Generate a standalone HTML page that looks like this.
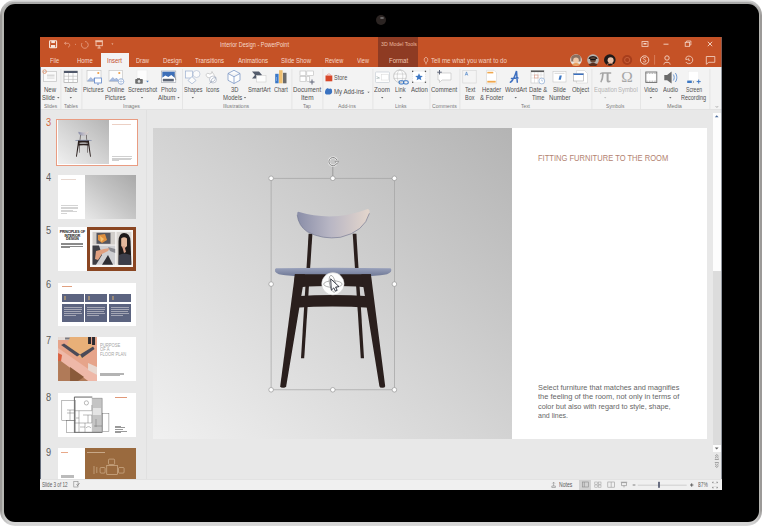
<!DOCTYPE html><html><head><meta charset="utf-8"><style>
*{margin:0;padding:0;box-sizing:border-box}
html,body{width:762px;height:527px;overflow:hidden;background:#fff;font-family:"Liberation Sans",sans-serif;position:relative}
.a{position:absolute}
.t{position:absolute;white-space:nowrap;line-height:1;transform-origin:0 0}
svg{position:absolute;left:0;top:0}
</style></head><body>
<div class="a" style="left:0;top:0;width:762px;height:526px;border-radius:15px;background:linear-gradient(to bottom,#e2e2e2 0px,#c6c6c6 2px,#9c9a98 16px,#9c9a98 510px,#c8c8c8 522px,#dcdcdc 526px)"></div>
<div class="a" style="left:2px;top:2px;width:758px;height:522px;border-radius:13px;background:linear-gradient(to bottom,#a8a8a8 0px,#b6b6b2 12px,#b6b6b2 508px,#d8d8d8 522px)"></div>
<div class="a" style="left:3.5px;top:4px;width:755px;height:518px;border-radius:11px;background:#000"></div>
<div class="a" style="left:376px;top:15px;width:10px;height:10px;border-radius:50%;background:#2b2422"></div>
<div class="a" style="left:380px;top:16.5px;width:4px;height:2px;border-radius:50%;background:#8a8a8a;opacity:.7"></div>
<div class="a" style="left:40px;top:37px;width:682px;height:453px;background:#e8e8e8;overflow:hidden">
</div>
<div class="a" style="left:40px;top:37px;width:682px;height:30px;background:#c55226"></div>
<div class="a" style="left:378px;top:37px;width:40px;height:30px;background:#8e3b23"></div>
<div class="a" style="left:101px;top:52.5px;width:28px;height:15px;background:#f3f3f3"></div>
<div class="a" style="left:40px;top:67px;width:682px;height:42px;background:#f3f3f3"></div>
<div class="a" style="left:40px;top:109px;width:682px;height:1px;background:#e2e2e2"></div>
<div class="a" style="left:146px;top:110px;width:1px;height:369px;background:#e0e0e0"></div>
<div class="a" style="left:40px;top:479px;width:682px;height:11px;background:#f0f0f0;border-top:1px solid #e2e2e2"></div>
<div class="a" style="left:40px;top:67px;width:1px;height:423px;background:#3a4458;opacity:.75"></div>
<div class="a" style="left:721px;top:37px;width:1px;height:453px;background:#5a6270;opacity:.6"></div>
<svg width="762" height="527" viewBox="0 0 762 527"><rect x="60.5" y="69" width="0.8" height="40" fill="#e1e1e1"/><rect x="81.5" y="69" width="0.8" height="40" fill="#e1e1e1"/><rect x="182" y="69" width="0.8" height="40" fill="#e1e1e1"/><rect x="291.5" y="69" width="0.8" height="40" fill="#e1e1e1"/><rect x="322.5" y="69" width="0.8" height="40" fill="#e1e1e1"/><rect x="372.5" y="69" width="0.8" height="40" fill="#e1e1e1"/><rect x="429.5" y="69" width="0.8" height="40" fill="#e1e1e1"/><rect x="459.5" y="69" width="0.8" height="40" fill="#e1e1e1"/><rect x="591.5" y="69" width="0.8" height="40" fill="#e1e1e1"/><rect x="640" y="69" width="0.8" height="40" fill="#e1e1e1"/><rect x="709.5" y="69" width="0.8" height="40" fill="#e1e1e1"/><path d="M57.1 97.1 h2.4 l-1.2 1.4z" fill="#6a6a6a"/><path d="M69.6 97.1 h2.4 l-1.2 1.4z" fill="#6a6a6a"/><path d="M140.8 97.1 h2.4 l-1.2 1.4z" fill="#6a6a6a"/><path d="M177.3 97.1 h2.4 l-1.2 1.4z" fill="#6a6a6a"/><path d="M191.6 97.1 h2.4 l-1.2 1.4z" fill="#6a6a6a"/><path d="M243.8 97.1 h2.4 l-1.2 1.4z" fill="#6a6a6a"/><path d="M381.0 97.1 h2.4 l-1.2 1.4z" fill="#6a6a6a"/><path d="M399.3 97.1 h2.4 l-1.2 1.4z" fill="#6a6a6a"/><path d="M514.5 97.1 h2.4 l-1.2 1.4z" fill="#6a6a6a"/><path d="M649.7 97.1 h2.4 l-1.2 1.4z" fill="#6a6a6a"/><path d="M669.1 97.1 h2.4 l-1.2 1.4z" fill="#6a6a6a"/><path d="M367.3 91.7 h2.4 l-1.2 1.4z" fill="#6a6a6a"/><path d="M604 97.1 h2.4 l-1.2 1.4z" fill="#c0c0c0"/><rect x="43.5" y="71.5" width="13" height="10" fill="#fafafa" stroke="#c9c9c9" stroke-width="0.8"/><rect x="47" y="74.5" width="7.5" height="2" fill="#d8d8d8"/><rect x="47" y="77.5" width="7.5" height="1.2" fill="#dedede"/><circle cx="44.6" cy="71.6" r="1.8" fill="none" stroke="#e0906a" stroke-width="0.9"/><rect x="64" y="71" width="13.5" height="11.5" fill="#fdfdfd" stroke="#a8a8a8" stroke-width="0.7"/><rect x="64" y="71" width="13.5" height="2" fill="#50586a"/><path d="M64 76.2h13.5M64 79.4h13.5M68.5 73v9.5M73 73v9.5" stroke="#b8b8b8" stroke-width="0.6"/><rect x="87" y="70.5" width="14" height="11" fill="#fdfdfd" stroke="#c8c8c8" stroke-width="0.7"/><circle cx="98.3" cy="73" r="1.1" fill="#f0a04a"/><path d="M87.5 81 l3.2-3.5 2.2 2 1.5-1.5 2.5 3z" fill="#a9bde0" stroke="#7e99c8" stroke-width="0.5"/><rect x="94.5" y="78" width="7" height="5" fill="#fff" stroke="#5f86c8" stroke-width="0.8"/><path d="M97 84.2h2" stroke="#5f86c8" stroke-width="0.8"/><rect x="109" y="70.5" width="13.5" height="11" fill="#fdfdfd" stroke="#c8c8c8" stroke-width="0.7"/><circle cx="119.3" cy="73" r="1.1" fill="#f0a04a"/><path d="M109.5 81 l3.2-3.5 2.2 2 1.5-1.5 2.5 3z" fill="#a9bde0" stroke="#7e99c8" stroke-width="0.5"/><circle cx="121" cy="81.5" r="2.8" fill="#fff" stroke="#7c9ccc" stroke-width="0.7"/><path d="M118.2 81.5h5.6M121 78.7v5.6" stroke="#9bb2d8" stroke-width="0.5"/><rect x="137" y="70" width="10" height="10.5" fill="#fdfdfd" stroke="#e6e6e6" stroke-width="0.5"/><rect x="135.2" y="79" width="7.6" height="4.8" rx="0.8" fill="#6e6e6e"/><rect x="137" y="78.2" width="3" height="1.2" fill="#6e6e6e"/><circle cx="139" cy="81.4" r="1.3" fill="#ddd"/><path d="M146.2 80.8 h2.6 l-1.3 1.6z" fill="#4a80c8"/><rect x="161.6" y="71" width="14.2" height="11.5" fill="#fff" stroke="#9aa0aa" stroke-width="0.6"/><rect x="162.3" y="71.7" width="12.5" height="6" fill="#3d6fb8"/><path d="M162.3 77.7 l3-2.2 3 1.5 3-2 3 2.5 v2.5 h-12.5z" fill="#fff"/><rect x="162.8" y="78.8" width="11" height="2.6" fill="#5b6474"/><path d="M174.3 74 l1.5 6" stroke="#777" stroke-width="0.5"/><rect x="185.5" y="71" width="7" height="7" fill="#fbfbfb" stroke="#9cb0d0" stroke-width="0.7"/><circle cx="196.5" cy="74" r="3.5" fill="#fbfbfb" stroke="#b6c2d6" stroke-width="0.7"/><path d="M192 76.5 l4 4 -4 3.3 -4-3.3z" fill="#fbfbfb" stroke="#9cb0d0" stroke-width="0.7"/><path d="M206 74.5 l2-1.5 1 1 2.2-.2 .8-2.3 1.2 2.3 c2 1 1 4-1 4 h-3 c-2 0-3-1.5-3.2-3.3z" fill="#fff" stroke="#b4b4b4" stroke-width="0.6"/><circle cx="213" cy="79.5" r="3.5" fill="#fff" stroke="#a0a8b8" stroke-width="0.6"/><path d="M211 82 c0-3 2-4.5 4.5-4.5 0 2.5-1.5 4.5-4.5 4.5z M209.5 83.5 l2-2" fill="none" stroke="#8c98b0" stroke-width="0.6"/><path d="M234 70.3 l6 3.2 v6.8 l-6 3.2 -6-3.2 v-6.8z M228 73.5 l6 3.2 6-3.2 M234 76.7v6.8" fill="#fdfdfd" stroke="#6f8cc0" stroke-width="0.7" stroke-linejoin="round"/><path d="M252 71.5 h7 l3 3.5 -3 3.5 h-7 l3-3.5z" fill="#545c6c"/><rect x="256.5" y="75.5" width="9.5" height="6.5" fill="#fdfdfd" stroke="#d0d0d0" stroke-width="0.6"/><rect x="275.2" y="73.8" width="3.4" height="9.5" fill="#3a78c8"/><rect x="279" y="70.2" width="3.6" height="13.1" fill="#f0c070"/><rect x="283" y="72.8" width="3.5" height="10.5" fill="#6c6c6c"/><path d="M276.5 77v4" stroke="#9cc0ee" stroke-width="0.6"/><rect x="300" y="71" width="5.8" height="4.5" fill="#fff" stroke="#bdbdbd" stroke-width="0.6"/><rect x="306.8" y="71" width="6.5" height="4.5" fill="#fff" stroke="#bdbdbd" stroke-width="0.6"/><rect x="300" y="76.5" width="5.8" height="5" fill="#fff" stroke="#bdbdbd" stroke-width="0.6"/><rect x="306.8" y="76.5" width="2.5" height="5" fill="#fff" stroke="#bdbdbd" stroke-width="0.6"/><path d="M312 79.5v5M309.5 82h5" stroke="#5e6478" stroke-width="1"/><path d="M325.5 75.5 h6.8 v5.8 h-6.8z" fill="#d8472a"/><path d="M327 75.5 c0-2 3.8-2 3.8 0" fill="none" stroke="#e87060" stroke-width="0.6"/><path d="M325.5 90 c1-2 3-2 3.5-1 1-1.2 3.3-.4 3 1.8 c.6 1.5-.4 3.5-2.2 3.6 h-3.4 c-1.6 0-1.8-2.2-.9-4.4z" fill="#3a72c0"/><rect x="375.5" y="72" width="14" height="10.5" rx="0.8" fill="#fdfdfd" stroke="#c0c8d0" stroke-width="0.6"/><rect x="381.5" y="74.5" width="7" height="5.5" fill="#fff" stroke="#d8d8d8" stroke-width="0.5"/><path d="M376.5 76.5 l3 1.5 M376.5 78.5 l3-0.5" stroke="#9aa" stroke-width="0.6"/><circle cx="400" cy="76.2" r="6.3" fill="#fdfdfd" stroke="#a8a8a8" stroke-width="0.6"/><ellipse cx="400" cy="76.2" rx="2.8" ry="6.3" fill="none" stroke="#b8b8b8" stroke-width="0.5"/><path d="M393.8 74h12.4M393.8 78.4h12.4" stroke="#b8b8b8" stroke-width="0.5"/><rect x="399" y="80.8" width="4.8" height="3.2" rx="1.6" fill="none" stroke="#3d78c4" stroke-width="1.1"/><rect x="403.5" y="80.8" width="4.8" height="3.2" rx="1.6" fill="none" stroke="#3d78c4" stroke-width="1.1"/><rect x="412.5" y="71.2" width="13" height="11" fill="#fff" stroke="#c8c8c8" stroke-width="0.4" stroke-dasharray="1 1"/><rect x="412" y="70.7" width="1.3" height="1.3" fill="#555"/><rect x="424.8" y="70.7" width="1.3" height="1.3" fill="#555"/><rect x="412" y="81.6" width="1.3" height="1.3" fill="#555"/><rect x="424.8" y="81.6" width="1.3" height="1.3" fill="#555"/><path d="M419 73.2 l1.1 2.5 2.7.2 -2.1 1.8 .7 2.6 -2.4-1.4 -2.4 1.4 .7-2.6 -2.1-1.8 2.7-.2z" fill="#3d78c4"/><path d="M438 73 h13 v7 h-9 l-2.5 2.5 v-2.5 h-1.5z" fill="#fff" stroke="#c4c4c4" stroke-width="0.7"/><path d="M439.5 70v4.5M437.2 72.2h4.6" stroke="#5e6478" stroke-width="1"/><rect x="462.8" y="70.6" width="13.4" height="12.4" fill="#f4f4f4" stroke="#d4d4d4" stroke-width="0.6"/><path d="M465.2 75.5 l1.3-3.6 1.3 3.6 M465.7 74.4h1.6" fill="none" stroke="#3d78c4" stroke-width="0.6"/><path d="M486.5 70.3 h7.5 l2.5 2.5 v11 h-10z" fill="#fff" stroke="#d4d4d4" stroke-width="0.6"/><rect x="487.3" y="71.8" width="6" height="1.6" fill="#f0a84e"/><rect x="487.3" y="80.8" width="8.4" height="1.8" fill="#f0a84e"/><path d="M510.3 82.2 c2-.8 4.5-5.5 6.2-11.2 c.4 3.5 .4 7.5 .8 11.2 M511.5 78.6 c2-.3 5-.5 6.5-.6" fill="none" stroke="#3d6fc0" stroke-width="1.5" stroke-linecap="round"/><rect x="531" y="70.5" width="13" height="12.5" fill="#fff" stroke="#c4c4c4" stroke-width="0.6"/><rect x="531" y="70.5" width="13" height="1.6" fill="#5a5a5a"/><path d="M531 75h13M531 78h13M534.5 72v11M538 72v11M541 72v11" stroke="#d0d0d0" stroke-width="0.5"/><rect x="534.5" y="75" width="3.5" height="3" fill="none" stroke="#e0907a" stroke-width="0.5"/><circle cx="541.8" cy="81" r="2.9" fill="#fff" stroke="#7aa0d0" stroke-width="0.6"/><path d="M541.8 79.4v1.6h1.3" fill="none" stroke="#7aa0d0" stroke-width="0.5"/><rect x="553" y="71.5" width="13" height="10.5" fill="#fff" stroke="#c8c8c8" stroke-width="0.6"/><rect x="554.5" y="72.8" width="10" height="1" fill="#d6d6d6"/><path d="M558.6 79.8 l1-4.2 h2.2 l-1 4.2z" fill="#3d78c4"/><path d="M576.5 70.5 h8 l3 3 v9.5 h-11z" fill="#fff" stroke="#c8c8c8" stroke-width="0.5"/><rect x="573.5" y="73.5" width="10" height="7.5" fill="#fff" stroke="#a8a8a8" stroke-width="0.6"/><rect x="573.5" y="73.5" width="10" height="1.5" fill="#3a70c0"/><path d="M599.6 74.2 Q600.2 72.2 602.5 72.2 H611.2 V73.8 H608.6 V80 Q608.6 81.3 610.2 80.6 L610.8 81.4 Q609.6 82.6 607.8 82.4 Q606.6 82.2 606.6 80.5 V73.8 H603.8 Q603.6 79 601.5 82.4 L600.2 81.9 Q602 78.5 602 73.8 Q600.8 73.8 600.3 74.6Z" fill="#a6a6a6"/><text x="621.2" y="82.4" font-family="Liberation Serif" font-size="15.5" fill="#a6a6a6">&#937;</text><rect x="645.8" y="72" width="11" height="10.5" fill="#f8f8f8" stroke="#707070" stroke-width="0.9"/><rect x="647" y="73.6" width="8.6" height="7.3" fill="#fff"/><path d="M645.8 73.3h11M645.8 81.2h11" stroke="#606060" stroke-width="0.6" stroke-dasharray="0.8 0.8"/><path d="M664.3 75 h2.8 l4.5-3.4 v12 l-4.5-3.4 h-2.8z" fill="#6a6a6a"/><path d="M673.3 74.5 c1.2 1.5 1.2 4.5 0 6 M675.3 73 c2 2.3 2 6.7 0 9" fill="none" stroke="#4a80c8" stroke-width="0.8"/><rect x="688.4" y="71.3" width="10.2" height="9" fill="#fff" stroke="#e8e8e8" stroke-width="0.4"/><rect x="687.2" y="80.6" width="4.6" height="2.4" fill="#3d78c4"/><path d="M692.8 81.2 l1.2 .8 -1.2 .8" fill="none" stroke="#555" stroke-width="0.5"/><path d="M698.7 79.6v4M696.7 81.6h4" stroke="#3d78c4" stroke-width="1"/><path d="M715.7 106.2 l1.2 1.2 1.2-1.2" fill="none" stroke="#777" stroke-width="0.6"/><rect x="49.6" y="40.8" width="7" height="7" rx="0.6" fill="none" stroke="#f8e6dd" stroke-width="1.1"/><rect x="51.3" y="40.8" width="3.6" height="2.3" fill="#f8e6dd"/><rect x="51" y="45" width="4.2" height="2.8" fill="#f8e6dd"/><path d="M64.5 43.3 h3.5 c2 0 2.5 3.5 0 3.7 M64.5 43.3 l1.6-1.4 M64.5 43.3 l1.6 1.4" fill="none" stroke="#e8a58a" stroke-width="0.8"/><circle cx="75.5" cy="44.2" r="0.5" fill="#e8a58a"/><path d="M85 41.5 a3.4 3.4 0 1 1 -3 1.5" fill="none" stroke="#e8a58a" stroke-width="0.8"/><rect x="95.3" y="40.3" width="7.6" height="1.4" fill="#f3cdb8"/><rect x="96" y="41.7" width="6.3" height="4" fill="none" stroke="#f3cdb8" stroke-width="0.9"/><path d="M99.1 45.7v2.2M97.5 48h3.2" stroke="#f3cdb8" stroke-width="0.9"/><path d="M111.4 43.6 h2 l-1 1.2z" fill="#f3cdb8"/><rect x="642" y="41.6" width="6" height="4.8" fill="none" stroke="#f5d8ca" stroke-width="0.8"/><rect x="643.5" y="43" width="3" height="1.5" fill="#f5d8ca"/><path d="M663.5 44.2h5" stroke="#f5d8ca" stroke-width="0.9"/><rect x="685.2" y="42.3" width="4.4" height="4" fill="none" stroke="#f5d8ca" stroke-width="0.8"/><path d="M686.6 42.3v-1.3h4.3v4h-1.3" fill="none" stroke="#f5d8ca" stroke-width="0.8"/><path d="M707.8 41.8l4.4 4.4M712.2 41.8l-4.4 4.4" stroke="#f5d8ca" stroke-width="0.9"/><path d="M426 62.8 c-2.5-1.5-2.2-5.2 0-5.4 2.2 .2 2.5 3.9 0 5.4z M425.2 63.8h1.6" fill="none" stroke="#f3d2c3" stroke-width="0.7"/><circle cx="576" cy="60" r="5.8" fill="#e8e4e0"/><path d="M571.2 57 c1.5-3 8-3.5 9.5 0 v4.5 h-9.5z" fill="#8a7060"/><circle cx="576" cy="60.2" r="2.8" fill="#f0c8a8"/><path d="M572 64.5 c2-2 6-2 8 0 l-1 1.3 h-6z" fill="#e8a060"/><circle cx="593" cy="60" r="5.8" fill="#b8b4b0"/><path d="M588.5 59 c0-4 9-4 9 0z" fill="#2a2220"/><circle cx="593" cy="60" r="2.8" fill="#6a4a3a"/><rect x="590.3" y="58.8" width="5.4" height="1.4" fill="#111"/><path d="M588.5 64.5 c2-2 7-2 9 0 l-1.5 1.5 h-6z" fill="#5a3020"/><circle cx="609.8" cy="60" r="5.8" fill="#1e1a1a"/><circle cx="610.6" cy="60.3" r="3" fill="#e8c0a8"/><path d="M607 64.5 c1.5-1.5 5-1.5 6.5 0" stroke="#c88060" stroke-width="1" fill="none"/><circle cx="627.2" cy="60" r="5" fill="#a83e1c"/><circle cx="627.2" cy="60" r="2.6" fill="none" stroke="#c8603a" stroke-width="1"/><circle cx="644.6" cy="60" r="4.2" fill="none" stroke="#f5d8ca" stroke-width="0.9"/><path d="M646 58 c-1-1-3-.6-2.8.6 .2 1.2 2.8 1 2.8 2.4 0 1.2-2.2 1.4-3 .4" fill="none" stroke="#f5d8ca" stroke-width="0.8"/><path d="M654.6 55v9.6" stroke="#e49a7c" stroke-width="0.6"/><circle cx="667" cy="58" r="2.2" fill="none" stroke="#f5d8ca" stroke-width="0.9"/><path d="M663.8 64.5 c0-3 6.4-3 6.4 0" fill="none" stroke="#f5d8ca" stroke-width="0.9"/><path d="M686 57.5 a3.8 3.8 0 1 1 -.2 4.5 M686 57.5 l-.2 2 2-.2 M688.6 58.3v2h1.5" fill="none" stroke="#f5d8ca" stroke-width="0.8"/><path d="M706.3 56.5 h8.5 v5.8 h-6 l-2.5 2 z" fill="none" stroke="#f5d8ca" stroke-width="0.8"/></svg>
<div class="a" style="left:152.6px;top:128.2px;width:554.0px;height:311.0px;overflow:hidden"><div class="a" style="left:0;top:0;width:359.60px;height:311.00px;background:linear-gradient(to top right,#f0f0f0 0%,#d6d6d6 45%,#b4b4b4 100%)"></div><div class="a" style="left:359.60px;top:0;width:194.40px;height:311.00px;background:#fff"></div><svg width="554.0" height="311.0" viewBox="152.6 128.2 554.0 311.0" style="position:absolute;left:0;top:0"><defs><linearGradient id="bk554" x1="0" y1="0" x2="1" y2="0"><stop offset="0" stop-color="#8a8ea8"/><stop offset="0.45" stop-color="#b8b6c4"/><stop offset="1" stop-color="#e4d6cc"/></linearGradient><linearGradient id="st554" x1="0" y1="0" x2="0" y2="1"><stop offset="0" stop-color="#9aa2bc"/><stop offset="1" stop-color="#66708e"/></linearGradient></defs><path d="M308.2 234 L312 234 L303.8 358.5 L300.6 358.5Z" fill="#2a1f1d"/><path d="M352.3 234 L356 234 L363.6 358.5 L360.4 358.5Z" fill="#2a1f1d"/><path d="M297.8 212 Q333 222.5 367.3 209.3 Q369.8 209.8 369 213.5 Q364 232 340 237.5 Q322 240 307 232 Q298 226 296.8 215 Q296.6 212 297.8 212Z" fill="url(#bk554)"/><path d="M369 213.5 Q364 232 340 237.5 Q322 240 307 232 Q298 226 296.8 215" fill="none" stroke="#707490" stroke-width="0.8" opacity="0.8"/><path d="M275.5 268.5 Q332 267.5 390 268.5 Q391.5 269 390.5 272 Q388 275 380 275.5 Q332 280.5 285 275.5 Q277 275 274.8 272 Q274 269 275.5 268.5Z" fill="url(#st554)"/><path d="M294.5 274.5 L370.5 274.5 L371 288.5 Q358 286 332 286.3 Q306 286 293.5 288.5Z" fill="#2a1f1d"/><path d="M295.5 296.5 Q332 294 369 296.5 L369.5 308 Q332 305.5 294.5 308Z" fill="#2a1f1d"/><path d="M294.5 274.5 L304.5 274.5 L285.8 386.5 Q285 388 282.8 388 Q280 388 279.8 386.5Z" fill="#2a1f1d"/><path d="M361 274.5 L370.5 274.5 L384.8 386.5 Q384.6 388 381.8 388 Q379.2 388 379 386.5Z" fill="#2a1f1d"/><rect x="270.7" y="178.5" width="123.3" height="211.5" fill="none" stroke="#a4a4a4" stroke-width="0.7"/><path d="M332.4 166V178.5" stroke="#8a8a8a" stroke-width="0.7"/><circle cx="270.7" cy="178.5" r="2.3" fill="#fff" stroke="#8c8c8c" stroke-width="0.6"/><circle cx="332.4" cy="178.5" r="2.3" fill="#fff" stroke="#8c8c8c" stroke-width="0.6"/><circle cx="394" cy="178.5" r="2.3" fill="#fff" stroke="#8c8c8c" stroke-width="0.6"/><circle cx="270.7" cy="284.3" r="2.3" fill="#fff" stroke="#8c8c8c" stroke-width="0.6"/><circle cx="394" cy="284.3" r="2.3" fill="#fff" stroke="#8c8c8c" stroke-width="0.6"/><circle cx="270.7" cy="390" r="2.3" fill="#fff" stroke="#8c8c8c" stroke-width="0.6"/><circle cx="332.4" cy="390" r="2.3" fill="#fff" stroke="#8c8c8c" stroke-width="0.6"/><circle cx="394" cy="390" r="2.3" fill="#fff" stroke="#8c8c8c" stroke-width="0.6"/><path d="M336.2 163.8 A4.1 4.1 0 1 1 336.4 160.2" fill="none" stroke="#ececec" stroke-width="2.2"/><path d="M336.2 163.8 A4.1 4.1 0 1 1 336.4 160.2" fill="none" stroke="#7a7a7a" stroke-width="0.9"/><path d="M334.6 161.6 L338.2 161.6 L336.4 164.4Z" fill="#f8f8f8" stroke="#7a7a7a" stroke-width="0.6"/><circle cx="332.5" cy="284" r="11.2" fill="#fdfdfd" stroke="#c4c4c4" stroke-width="0.5"/><ellipse cx="332.5" cy="284.3" rx="9.2" ry="3.3" fill="none" stroke="#8a8a8a" stroke-width="0.65"/><ellipse cx="332.2" cy="284" rx="3" ry="8.6" transform="rotate(-12 332.2 284)" fill="none" stroke="#8a8a8a" stroke-width="0.65"/><path d="M330.3 279 L338.6 286.8 L335.2 287.3 L336.8 290.6 L335 291.3 L333.4 288.1 L330.9 290.4Z" fill="#fdfdfd" stroke="#1e2230" stroke-width="0.85" stroke-linejoin="round"/></svg></div>
<div class="a" style="left:712.6px;top:112.5px;width:8.2px;height:339px;background:#dcdcdc"></div>
<div class="a" style="left:712.6px;top:112.5px;width:8.2px;height:158.5px;background:#fdfdfd"></div>
<div class="a" style="left:712.6px;top:445px;width:8.2px;height:7px;background:#fdfdfd"></div>
<div class="a" style="left:579.3px;top:479.5px;width:11.7px;height:10.5px;background:#d2d2d2"></div>
<div class="t" style="left:45.8px;top:118.2px;font-size:10px;color:#d2693f;transform:scaleX(0.92)">3</div>
<div class="t" style="left:45.8px;top:172.7px;font-size:10px;color:#5e5e5e;transform:scaleX(0.92)">4</div>
<div class="t" style="left:45.8px;top:225.7px;font-size:10px;color:#5e5e5e;transform:scaleX(0.92)">5</div>
<div class="t" style="left:45.8px;top:279.7px;font-size:10px;color:#5e5e5e;transform:scaleX(0.92)">6</div>
<div class="t" style="left:45.8px;top:335.7px;font-size:10px;color:#5e5e5e;transform:scaleX(0.92)">7</div>
<div class="t" style="left:45.8px;top:392.7px;font-size:10px;color:#5e5e5e;transform:scaleX(0.92)">8</div>
<div class="t" style="left:45.8px;top:447.7px;font-size:10px;color:#5e5e5e;transform:scaleX(0.92)">9</div>
<div class="a" style="left:56px;top:118.6px;width:81.5px;height:47px;border:1.5px solid #e99c82;background:#fff"></div>
<div class="a" style="left:57.5px;top:120.2px;width:78.5px;height:44px;overflow:hidden;background:#fff"><div class="a" style="left:0;top:0;width:554.0px;height:311.0px;transform:scale(0.14170);transform-origin:0 0"><div class="a" style="left:0;top:0;width:359.60px;height:311.00px;background:linear-gradient(to top right,#f0f0f0 0%,#d6d6d6 45%,#b4b4b4 100%)"></div><div class="a" style="left:359.60px;top:0;width:194.40px;height:311.00px;background:#fff"></div><svg width="554.0" height="311.0" viewBox="152.6 128.2 554.0 311.0" style="position:absolute;left:0;top:0"><defs><linearGradient id="bk554" x1="0" y1="0" x2="1" y2="0"><stop offset="0" stop-color="#8a8ea8"/><stop offset="0.45" stop-color="#b8b6c4"/><stop offset="1" stop-color="#e4d6cc"/></linearGradient><linearGradient id="st554" x1="0" y1="0" x2="0" y2="1"><stop offset="0" stop-color="#9aa2bc"/><stop offset="1" stop-color="#66708e"/></linearGradient></defs><path d="M308.2 234 L312 234 L303.8 358.5 L300.6 358.5Z" fill="#2a1f1d"/><path d="M352.3 234 L356 234 L363.6 358.5 L360.4 358.5Z" fill="#2a1f1d"/><path d="M297.8 212 Q333 222.5 367.3 209.3 Q369.8 209.8 369 213.5 Q364 232 340 237.5 Q322 240 307 232 Q298 226 296.8 215 Q296.6 212 297.8 212Z" fill="url(#bk554)"/><path d="M369 213.5 Q364 232 340 237.5 Q322 240 307 232 Q298 226 296.8 215" fill="none" stroke="#707490" stroke-width="0.8" opacity="0.8"/><path d="M275.5 268.5 Q332 267.5 390 268.5 Q391.5 269 390.5 272 Q388 275 380 275.5 Q332 280.5 285 275.5 Q277 275 274.8 272 Q274 269 275.5 268.5Z" fill="url(#st554)"/><path d="M294.5 274.5 L370.5 274.5 L371 288.5 Q358 286 332 286.3 Q306 286 293.5 288.5Z" fill="#2a1f1d"/><path d="M295.5 296.5 Q332 294 369 296.5 L369.5 308 Q332 305.5 294.5 308Z" fill="#2a1f1d"/><path d="M294.5 274.5 L304.5 274.5 L285.8 386.5 Q285 388 282.8 388 Q280 388 279.8 386.5Z" fill="#2a1f1d"/><path d="M361 274.5 L370.5 274.5 L384.8 386.5 Q384.6 388 381.8 388 Q379.2 388 379 386.5Z" fill="#2a1f1d"/></svg></div><div class="a" style="left:54px;top:4.3px;width:19px;height:0.8px;background:#ecd0c4"></div><div class="a" style="left:54px;top:36.0px;width:20px;height:0.6px;background:#d0d0d0"></div><div class="a" style="left:54px;top:37.4px;width:20px;height:0.6px;background:#d0d0d0"></div><div class="a" style="left:54px;top:38.8px;width:19px;height:0.6px;background:#d0d0d0"></div><div class="a" style="left:54px;top:40.2px;width:7px;height:0.6px;background:#d0d0d0"></div></div>
<div class="a" style="left:57.5px;top:175px;width:78.5px;height:43.5px;overflow:hidden;background:#fff"><div class="a" style="left:27.5px;top:0;width:51px;height:44px;background:linear-gradient(to top right,#e8e8e8 0%,#c6c6c6 50%,#a9a9a9 100%)"></div><div class="a" style="left:3.5px;top:3.5px;width:15px;height:0.7px;background:#e8d8d0"></div><div class="a" style="left:3.5px;top:30.0px;width:17px;height:0.6px;background:#d4d4d4"></div><div class="a" style="left:3.5px;top:31.6px;width:17px;height:0.6px;background:#d4d4d4"></div><div class="a" style="left:3.5px;top:33.2px;width:17px;height:0.6px;background:#d4d4d4"></div><div class="a" style="left:3.5px;top:34.8px;width:12px;height:0.6px;background:#d4d4d4"></div><div class="a" style="left:3.5px;top:36.4px;width:16px;height:0.6px;background:#d4d4d4"></div><div class="a" style="left:3.5px;top:38.0px;width:6px;height:0.6px;background:#d4d4d4"></div></div>
<div class="a" style="left:57.5px;top:227.2px;width:78.5px;height:43.8px;overflow:hidden;background:#fff"><div class="a" style="left:29.4px;top:0;width:49.1px;height:43.8px;background:#8a4622"></div><div class="a" style="left:32.2px;top:2.6px;width:43.8px;height:37.6px;background:#f8f6f4"></div><svg width="78.5" height="43.8" viewBox="0 0 78.5 43.8" style="position:absolute;left:0;top:0"><rect x="34.5" y="4.9" width="22.7" height="12.7" fill="#d2ceca"/><rect x="38.5" y="5.8" width="14" height="11" fill="#56565e"/><path d="M40 8 L47 7 L49 13 L44 16 L40 13Z" fill="#e0903e"/><path d="M42 9 L46 12 L43 15Z" fill="#f4c070"/><rect x="34.5" y="18.5" width="22.7" height="19.2" fill="#cfcfd2"/><path d="M34.5 18.5 L41 18.5 L44 28 L38 37.7 H34.5Z" fill="#3e3e44"/><path d="M44 37.7 L50 28 L55 37.7Z" fill="#2e2e34"/><path d="M38 24 L46 22 L52 21 L50 24 L44 27 L40 33 L37 32Z" fill="#e0a080"/><path d="M50 20 L57.2 22 L57.2 26 L52 24Z" fill="#8a8a90"/><rect x="58.5" y="4.9" width="14.9" height="32.8" fill="#dad6d2"/><path d="M60.5 37.7 L60.5 14 Q61 6 66 6 Q72 6 72.5 14 L73.4 37.7Z" fill="#1e1a1a"/><path d="M63.2 11.5 Q66 9 69 11.5 L69 19 Q66 23 63.2 19Z" fill="#e4b89c"/><path d="M64 19 L66 26 L68 25 L66.5 19Z" fill="#d8a088"/><path d="M61 28 Q66 25 72.5 28 L73 37.7 H60.5Z" fill="#3c3e4a"/></svg><div class="t" style="left:0;top:4.3px;width:29.8px;text-align:center;font-size:3.5px;line-height:3.3px;color:#111;font-weight:bold;letter-spacing:-0.12px">PRINCIPLES OF<br>INTERIOR<br>DESIGN</div><div class="a" style="left:3.8px;top:15.8px;width:22px;height:0.6px;background:#8a8a8a"></div><div class="a" style="left:3.8px;top:17.1px;width:22px;height:0.6px;background:#8a8a8a"></div><div class="a" style="left:3.8px;top:18.400000000000002px;width:22px;height:0.6px;background:#8a8a8a"></div><div class="a" style="left:3.8px;top:19.700000000000003px;width:9px;height:0.6px;background:#8a8a8a"></div></div>
<div class="a" style="left:57.5px;top:282.5px;width:78.5px;height:43.5px;overflow:hidden;background:#fff"><div class="a" style="left:4.2px;top:3.8px;width:10.6px;height:1.2px;background:#e0a080"></div><div class="a" style="left:4.2px;top:11.1px;width:22.2px;height:8.4px;background:#5c6480"></div><div class="a" style="left:4.2px;top:21.4px;width:22.2px;height:18px;background:#5c6480"></div><div class="a" style="left:6.7px;top:13.5px;width:2px;height:4px;background:#9a8a78"></div><div class="a" style="left:6.2px;top:24.0px;width:18px;height:0.9px;background:#a4a6b4"></div><div class="a" style="left:6.2px;top:26.2px;width:18px;height:0.9px;background:#a4a6b4"></div><div class="a" style="left:6.2px;top:28.4px;width:17px;height:0.9px;background:#a4a6b4"></div><div class="a" style="left:6.2px;top:30.6px;width:18px;height:0.9px;background:#a4a6b4"></div><div class="a" style="left:6.2px;top:32.8px;width:12px;height:0.9px;background:#a4a6b4"></div><div class="a" style="left:27.8px;top:11.1px;width:22.2px;height:8.4px;background:#5c6480"></div><div class="a" style="left:27.8px;top:21.4px;width:22.2px;height:18px;background:#5c6480"></div><div class="a" style="left:30.3px;top:13.5px;width:2px;height:4px;background:#9a8a78"></div><div class="a" style="left:29.8px;top:24.0px;width:18px;height:0.9px;background:#a4a6b4"></div><div class="a" style="left:29.8px;top:26.2px;width:18px;height:0.9px;background:#a4a6b4"></div><div class="a" style="left:29.8px;top:28.4px;width:17px;height:0.9px;background:#a4a6b4"></div><div class="a" style="left:29.8px;top:30.6px;width:18px;height:0.9px;background:#a4a6b4"></div><div class="a" style="left:29.8px;top:32.8px;width:12px;height:0.9px;background:#a4a6b4"></div><div class="a" style="left:51.6px;top:11.1px;width:22.2px;height:8.4px;background:#5c6480"></div><div class="a" style="left:51.6px;top:21.4px;width:22.2px;height:18px;background:#5c6480"></div><div class="a" style="left:54.1px;top:13.5px;width:2px;height:4px;background:#9a8a78"></div><div class="a" style="left:53.6px;top:24.0px;width:18px;height:0.9px;background:#a4a6b4"></div><div class="a" style="left:53.6px;top:26.2px;width:18px;height:0.9px;background:#a4a6b4"></div><div class="a" style="left:53.6px;top:28.4px;width:17px;height:0.9px;background:#a4a6b4"></div><div class="a" style="left:53.6px;top:30.6px;width:18px;height:0.9px;background:#a4a6b4"></div><div class="a" style="left:53.6px;top:32.8px;width:12px;height:0.9px;background:#a4a6b4"></div></div>
<div class="a" style="left:57.5px;top:337.3px;width:78.5px;height:44.2px;overflow:hidden;background:#fff"><div class="a" style="left:0;top:0;width:39.1px;height:44px;background:#e6a48a"></div><svg width="39.1" height="44" viewBox="0 0 39 44" style="position:absolute;left:0;top:0"><path d="M0 0 H14 V3 H0Z" fill="#e4dcd8"/><path d="M7 0.5 h5 v2 h-5z" fill="#7a7a80"/><path d="M12 0 H30 L36 12 L24 22 L8 10Z" fill="#e8b078"/><path d="M3 8 L6 6.5 L22 17.5 L19 19.5Z" fill="#4a4a58"/><path d="M22 17.5 L35 9.5 L36.5 12 L24 21Z" fill="#4a4a58"/><path d="M30 0 H33 V7 H30Z M34 0 H37 V8 H34Z" fill="#2c2a30"/><path d="M0 11 L39 38 V44 H30 L0 22Z" fill="#eeb8a8"/><path d="M0 22 L30 44 H0Z" fill="#b07a58"/><path d="M0 16 L4 18 L3 24 L0 24Z" fill="#d86040"/><path d="M12 30 L26 40 L20 44 L12 44Z" fill="#8a5a3a"/><path d="M30 26 L39 30 V38 L30 33Z" fill="#e8d8d0"/></svg><div class="t" style="left:42.3px;top:6.5px;font-size:4.6px;line-height:4.6px;color:#a4a4a4;transform:scaleX(0.9)">PURPOSE<br>OF A<br>FLOOR PLAN</div><div class="a" style="left:42.7px;top:35.5px;width:24px;height:0.6px;background:#b4b4b4"></div><div class="a" style="left:42.7px;top:36.8px;width:24px;height:0.6px;background:#b4b4b4"></div><div class="a" style="left:42.7px;top:38.1px;width:20px;height:0.6px;background:#b4b4b4"></div></div>
<div class="a" style="left:57.5px;top:393.3px;width:78.5px;height:44px;overflow:hidden;background:#fff"><svg width="78.5" height="44" viewBox="0 0 78.5 44" style="position:absolute;left:0;top:0"><rect x="33.8" y="5.3" width="10.4" height="34" fill="#c4c4c4"/><rect x="35" y="15" width="8" height="7" fill="#e4e4e4"/><g fill="none" stroke="#6a6a6a" stroke-width="0.45"><rect x="3.8" y="7.7" width="13.7" height="19.7"/><rect x="8.4" y="27.4" width="9.1" height="12"/><rect x="44.2" y="20.3" width="6.7" height="18.3"/><path d="M16.3 4 V39.4 H44.2 V5.3 H33.8 M16.3 17.7 H33.8 M21 17.7 V39.4 M16.3 30 H33.8 M25 22 H33.8 V30 M27 30 V39.4 M33.8 12 V17.7 M9 17 h7 M9 20 h7 M12 17 v10 M38 26 v8 M36 33 h8 M18 25 h3 M22 34 h5 M30 22 v8"/><circle cx="28.4" cy="9.9" r="2.1"/><path d="M28 35 a3 3 0 0 1 5 0"/></g><rect x="16.3" y="3.6" width="18" height="0.9" fill="#555"/><rect x="16" y="4" width="0.8" height="35.4" fill="#666"/><rect x="16.3" y="38.9" width="28" height="0.8" fill="#666"/></svg><div class="a" style="left:57.8px;top:3.8px;width:11.4px;height:1.2px;background:#e09878"></div><div class="a" style="left:57.8px;top:32.5px;width:6px;height:0.6px;background:#9a9a9a"></div><div class="a" style="left:57.8px;top:34.1px;width:10px;height:0.6px;background:#9a9a9a"></div><div class="a" style="left:57.8px;top:35.7px;width:8px;height:0.6px;background:#9a9a9a"></div><div class="a" style="left:57.8px;top:37.3px;width:12px;height:0.6px;background:#9a9a9a"></div><div class="a" style="left:57.8px;top:38.9px;width:6px;height:0.6px;background:#9a9a9a"></div></div>
<div class="a" style="left:57.5px;top:448.4px;width:78.5px;height:30.6px;overflow:hidden;background:#fff"><div class="a" style="left:27.1px;top:0;width:51.4px;height:44px;background:#9a6a3e"></div><div class="a" style="left:3.6px;top:4px;width:6.5px;height:1px;background:#e8a888"></div><div class="a" style="left:29.8px;top:4px;width:18px;height:0.8px;background:#c8a888"></div><div class="a" style="left:3.6px;top:27px;width:13px;height:2.6px;background:#777;opacity:.5"></div><svg width="78.5" height="44" viewBox="0 0 78.5 44" style="position:absolute;left:0;top:0"><g fill="none" stroke="#e0c4a4" stroke-width="0.55"><rect x="48.8" y="17.3" width="10.6" height="9.4"/><rect x="50.5" y="11.1" width="6.1" height="5.5" rx="1"/><rect x="42.1" y="19.5" width="5" height="5.6" rx="1"/><rect x="60.5" y="19.5" width="5.6" height="5.6" rx="1"/><path d="M36 18 v8 M38.8 19 v6"/></g></svg></div>
<div class="a" style="left:40px;top:479px;width:682px;height:11px;background:#f0f0f0;border-top:1px solid #e2e2e2"></div>
<div class="a" style="left:579.3px;top:479.5px;width:11.7px;height:10.5px;background:#d2d2d2"></div>
<svg width="762" height="527" viewBox="0 0 762 527"><path d="M714.8 117.3 l1.9-2 1.9 2z" fill="#4a6a9a"/><path d="M714.8 447.5 l1.9 2 1.9-2z" fill="#666"/><path d="M715 458.2 l1.8-1.6 1.8 1.6 M715 456.2 l1.8-1.6 1.8 1.6 M714.8 459.4h4" fill="none" stroke="#666" stroke-width="0.6"/><path d="M715 463.8 l1.8 1.6 1.8-1.6 M715 465.8 l1.8 1.6 1.8-1.6 M714.8 462.6h4" fill="none" stroke="#666" stroke-width="0.6"/><rect x="73.8" y="481.5" width="4.2" height="5.5" fill="none" stroke="#888" stroke-width="0.6"/><path d="M76.5 484.5 l1 1 2-2.5" fill="none" stroke="#555" stroke-width="0.6"/><path d="M551.8 487.5 h3.6 v-1.5 h-3.6z M553.6 482.3v3.7 M552.3 483.5l1.3-1.3 1.3 1.3" fill="none" stroke="#888" stroke-width="0.6"/><rect x="582.3" y="482" width="6" height="5" fill="none" stroke="#8a8a8a" stroke-width="0.6"/><path d="M584.3 482v5" stroke="#8a8a8a" stroke-width="0.6"/><rect x="594.8" y="482" width="2.6" height="2.2" fill="none" stroke="#999" stroke-width="0.5"/><rect x="598.4" y="482" width="2.6" height="2.2" fill="none" stroke="#999" stroke-width="0.5"/><rect x="594.8" y="485" width="2.6" height="2.2" fill="none" stroke="#999" stroke-width="0.5"/><rect x="598.4" y="485" width="2.6" height="2.2" fill="none" stroke="#999" stroke-width="0.5"/><rect x="607.8" y="482" width="6.8" height="5.2" fill="none" stroke="#999" stroke-width="0.6"/><path d="M611.2 482v5.2" stroke="#999" stroke-width="0.6"/><path d="M620.8 482.2h6.4 M621.5 482.6h5v3h-5z M624 485.6v1.8" fill="none" stroke="#888" stroke-width="0.6"/><path d="M632.7 485h2.7" stroke="#666" stroke-width="0.8"/><path d="M637.8 485.2h48.9" stroke="#b8b8b8" stroke-width="0.6"/><rect x="658.2" y="481.8" width="1.6" height="6" fill="#4a5068"/><path d="M690 485h3.4M691.7 483.3v3.4" stroke="#555" stroke-width="0.9"/><path d="M712.5 482 l1.5 1.5 M712.5 482 h1.2 M712.5 482 v1.2 M717.5 482 l-1.5 1.5 M717.5 482 h-1.2 M717.5 482 v1.2 M712.5 488 l1.5-1.5 M712.5 488h1.2 M712.5 488v-1.2 M717.5 488 l-1.5-1.5 M717.5 488h-1.2 M717.5 488v-1.2" fill="none" stroke="#777" stroke-width="0.5"/></svg>
<div class="t" style="left:220.00px;top:42.18px;font-size:6.5px;color:#f6dacd;transform:scaleX(0.8481);">Interior Design  -  PowerPoint</div>
<div class="t" style="left:381.00px;top:41.96px;font-size:5.5px;color:#ecb89e;transform:scaleX(0.9497);">3D Model Tools</div>
<div class="t" style="left:49.80px;top:57.78px;font-size:6.5px;color:#f6dacd;transform:scaleX(0.8688);">File</div>
<div class="t" style="left:77.00px;top:57.78px;font-size:6.5px;color:#f6dacd;transform:scaleX(0.9113);">Home</div>
<div class="t" style="left:136.00px;top:57.78px;font-size:6.5px;color:#f6dacd;transform:scaleX(0.8571);">Draw</div>
<div class="t" style="left:162.70px;top:57.78px;font-size:6.5px;color:#f6dacd;transform:scaleX(0.9341);">Design</div>
<div class="t" style="left:195.00px;top:57.78px;font-size:6.5px;color:#f6dacd;transform:scaleX(0.9192);">Transitions</div>
<div class="t" style="left:237.60px;top:57.78px;font-size:6.5px;color:#f6dacd;transform:scaleX(0.9361);">Animations</div>
<div class="t" style="left:281.00px;top:57.78px;font-size:6.5px;color:#f6dacd;transform:scaleX(0.9225);">Slide Show</div>
<div class="t" style="left:324.50px;top:57.78px;font-size:6.5px;color:#f6dacd;transform:scaleX(0.8540);">Review</div>
<div class="t" style="left:357.00px;top:57.78px;font-size:6.5px;color:#f6dacd;transform:scaleX(0.8589);">View</div>
<div class="t" style="left:388.60px;top:57.78px;font-size:6.5px;color:#f2c8b4;transform:scaleX(0.9278);">Format</div>
<div class="t" style="left:106.90px;top:57.78px;font-size:6.5px;color:#c4502a;transform:scaleX(0.9227);">Insert</div>
<div class="t" style="left:431.40px;top:57.78px;font-size:6.5px;color:#f3d2c3;transform:scaleX(0.9463);">Tell me what you want to do</div>
<div class="t" style="left:44.20px;top:86.78px;font-size:6.3px;color:#505050;transform:scaleX(0.9606);">New</div>
<div class="t" style="left:64.10px;top:86.78px;font-size:6.3px;color:#505050;transform:scaleX(0.8769);">Table</div>
<div class="t" style="left:83.00px;top:86.78px;font-size:6.3px;color:#505050;transform:scaleX(0.9012);">Pictures</div>
<div class="t" style="left:106.80px;top:86.78px;font-size:6.3px;color:#505050;transform:scaleX(0.9504);">Online</div>
<div class="t" style="left:127.50px;top:86.78px;font-size:6.3px;color:#505050;transform:scaleX(0.9167);">Screenshot</div>
<div class="t" style="left:160.90px;top:86.78px;font-size:6.3px;color:#505050;transform:scaleX(0.9419);">Photo</div>
<div class="t" style="left:183.90px;top:86.78px;font-size:6.3px;color:#505050;transform:scaleX(0.8709);">Shapes</div>
<div class="t" style="left:205.70px;top:86.78px;font-size:6.3px;color:#505050;transform:scaleX(0.8837);">Icons</div>
<div class="t" style="left:230.60px;top:86.78px;font-size:6.3px;color:#505050;transform:scaleX(0.9193);">3D</div>
<div class="t" style="left:248.10px;top:86.78px;font-size:6.3px;color:#505050;transform:scaleX(0.9098);">SmartArt</div>
<div class="t" style="left:274.20px;top:86.78px;font-size:6.3px;color:#505050;transform:scaleX(0.8962);">Chart</div>
<div class="t" style="left:293.00px;top:86.78px;font-size:6.3px;color:#505050;transform:scaleX(0.9791);">Document</div>
<div class="t" style="left:374.00px;top:86.78px;font-size:6.3px;color:#505050;transform:scaleX(0.9816);">Zoom</div>
<div class="t" style="left:395.20px;top:86.78px;font-size:6.3px;color:#505050;transform:scaleX(0.9090);">Link</div>
<div class="t" style="left:410.50px;top:86.78px;font-size:6.3px;color:#505050;transform:scaleX(0.9599);">Action</div>
<div class="t" style="left:431.00px;top:86.78px;font-size:6.3px;color:#505050;transform:scaleX(0.9599);">Comment</div>
<div class="t" style="left:464.70px;top:86.78px;font-size:6.3px;color:#505050;transform:scaleX(0.8919);">Text</div>
<div class="t" style="left:482.10px;top:86.78px;font-size:6.3px;color:#505050;transform:scaleX(0.9248);">Header</div>
<div class="t" style="left:504.90px;top:86.78px;font-size:6.3px;color:#505050;transform:scaleX(0.9575);">WordArt</div>
<div class="t" style="left:528.70px;top:86.78px;font-size:6.3px;color:#505050;transform:scaleX(0.9506);">Date &amp;</div>
<div class="t" style="left:553.10px;top:86.78px;font-size:6.3px;color:#505050;transform:scaleX(0.9213);">Slide</div>
<div class="t" style="left:572.20px;top:86.78px;font-size:6.3px;color:#505050;transform:scaleX(0.9396);">Object</div>
<div class="t" style="left:644.10px;top:86.78px;font-size:6.3px;color:#505050;transform:scaleX(0.8692);">Video</div>
<div class="t" style="left:663.20px;top:86.78px;font-size:6.3px;color:#505050;transform:scaleX(0.9314);">Audio</div>
<div class="t" style="left:685.90px;top:86.78px;font-size:6.3px;color:#505050;transform:scaleX(0.8070);">Screen</div>
<div class="t" style="left:593.70px;top:86.78px;font-size:6.3px;color:#b4b4b4;transform:scaleX(0.9293);">Equation</div>
<div class="t" style="left:618.10px;top:86.78px;font-size:6.3px;color:#b4b4b4;transform:scaleX(0.9382);">Symbol</div>
<div class="t" style="left:41.60px;top:94.78px;font-size:6.3px;color:#505050;transform:scaleX(0.9284);">Slide</div>
<div class="t" style="left:105.20px;top:94.78px;font-size:6.3px;color:#505050;transform:scaleX(0.9012);">Pictures</div>
<div class="t" style="left:158.30px;top:94.78px;font-size:6.3px;color:#505050;transform:scaleX(0.9637);">Album</div>
<div class="t" style="left:222.80px;top:94.78px;font-size:6.3px;color:#505050;transform:scaleX(0.9459);">Models</div>
<div class="t" style="left:300.60px;top:94.78px;font-size:6.3px;color:#505050;transform:scaleX(1.0289);">Item</div>
<div class="t" style="left:465.00px;top:94.78px;font-size:6.3px;color:#505050;transform:scaleX(0.8663);">Box</div>
<div class="t" style="left:480.00px;top:94.78px;font-size:6.3px;color:#505050;transform:scaleX(0.9732);">&amp; Footer</div>
<div class="t" style="left:531.50px;top:94.78px;font-size:6.3px;color:#505050;transform:scaleX(0.9012);">Time</div>
<div class="t" style="left:549.10px;top:94.78px;font-size:6.3px;color:#505050;transform:scaleX(0.9645);">Number</div>
<div class="t" style="left:681.20px;top:94.78px;font-size:6.3px;color:#505050;transform:scaleX(0.8710);">Recording</div>
<div class="t" style="left:333.60px;top:75.18px;font-size:6.3px;color:#505050;transform:scaleX(0.8771);">Store</div>
<div class="t" style="left:333.60px;top:89.28px;font-size:6.3px;color:#505050;transform:scaleX(0.9684);">My Add-ins</div>
<div class="t" style="left:43.70px;top:103.32px;font-size:6.0px;color:#7a7a7a;transform:scaleX(0.8016);">Slides</div>
<div class="t" style="left:64.00px;top:103.32px;font-size:6.0px;color:#7a7a7a;transform:scaleX(0.7957);">Tables</div>
<div class="t" style="left:123.00px;top:103.32px;font-size:6.0px;color:#7a7a7a;transform:scaleX(0.8589);">Images</div>
<div class="t" style="left:223.30px;top:103.32px;font-size:6.0px;color:#7a7a7a;transform:scaleX(0.8634);">Illustrations</div>
<div class="t" style="left:303.30px;top:103.32px;font-size:6.0px;color:#7a7a7a;transform:scaleX(0.8063);">Tap</div>
<div class="t" style="left:338.40px;top:103.32px;font-size:6.0px;color:#7a7a7a;transform:scaleX(0.8750);">Add-ins</div>
<div class="t" style="left:394.70px;top:103.32px;font-size:6.0px;color:#7a7a7a;transform:scaleX(0.8282);">Links</div>
<div class="t" style="left:432.00px;top:103.32px;font-size:6.0px;color:#7a7a7a;transform:scaleX(0.8515);">Comments</div>
<div class="t" style="left:521.10px;top:103.32px;font-size:6.0px;color:#7a7a7a;transform:scaleX(0.8088);">Text</div>
<div class="t" style="left:606.30px;top:103.32px;font-size:6.0px;color:#7a7a7a;transform:scaleX(0.7954);">Symbols</div>
<div class="t" style="left:667.00px;top:103.32px;font-size:6.0px;color:#7a7a7a;transform:scaleX(0.9118);">Media</div>
<div class="t" style="left:537.90px;top:154.07px;font-size:8.6px;color:#b38270;transform:scaleX(0.8799);">FITTING FURNITURE TO THE ROOM</div>
<div class="t" style="left:537.90px;top:383.76px;font-size:7.8px;color:#666666;transform:scaleX(0.9423);">Select furniture that matches and magnifies</div>
<div class="t" style="left:537.90px;top:393.36px;font-size:7.8px;color:#666666;transform:scaleX(0.9561);">the feeling of the room, not only in terms of</div>
<div class="t" style="left:537.90px;top:402.96px;font-size:7.8px;color:#666666;transform:scaleX(0.9357);">color but also with regard to style, shape,</div>
<div class="t" style="left:537.90px;top:412.46px;font-size:7.8px;color:#666666;transform:scaleX(0.8988);">and lines.</div>
<div class="t" style="left:41.70px;top:482.14px;font-size:6.8px;color:#5c5c5c;transform:scaleX(0.6775);">Slide 3 of 12</div>
<div class="t" style="left:558.60px;top:482.03px;font-size:6.6px;color:#5c5c5c;transform:scaleX(0.7721);">Notes</div>
<div class="t" style="left:698.20px;top:482.03px;font-size:6.6px;color:#5c5c5c;transform:scaleX(0.7350);">87%</div>

</body></html>
